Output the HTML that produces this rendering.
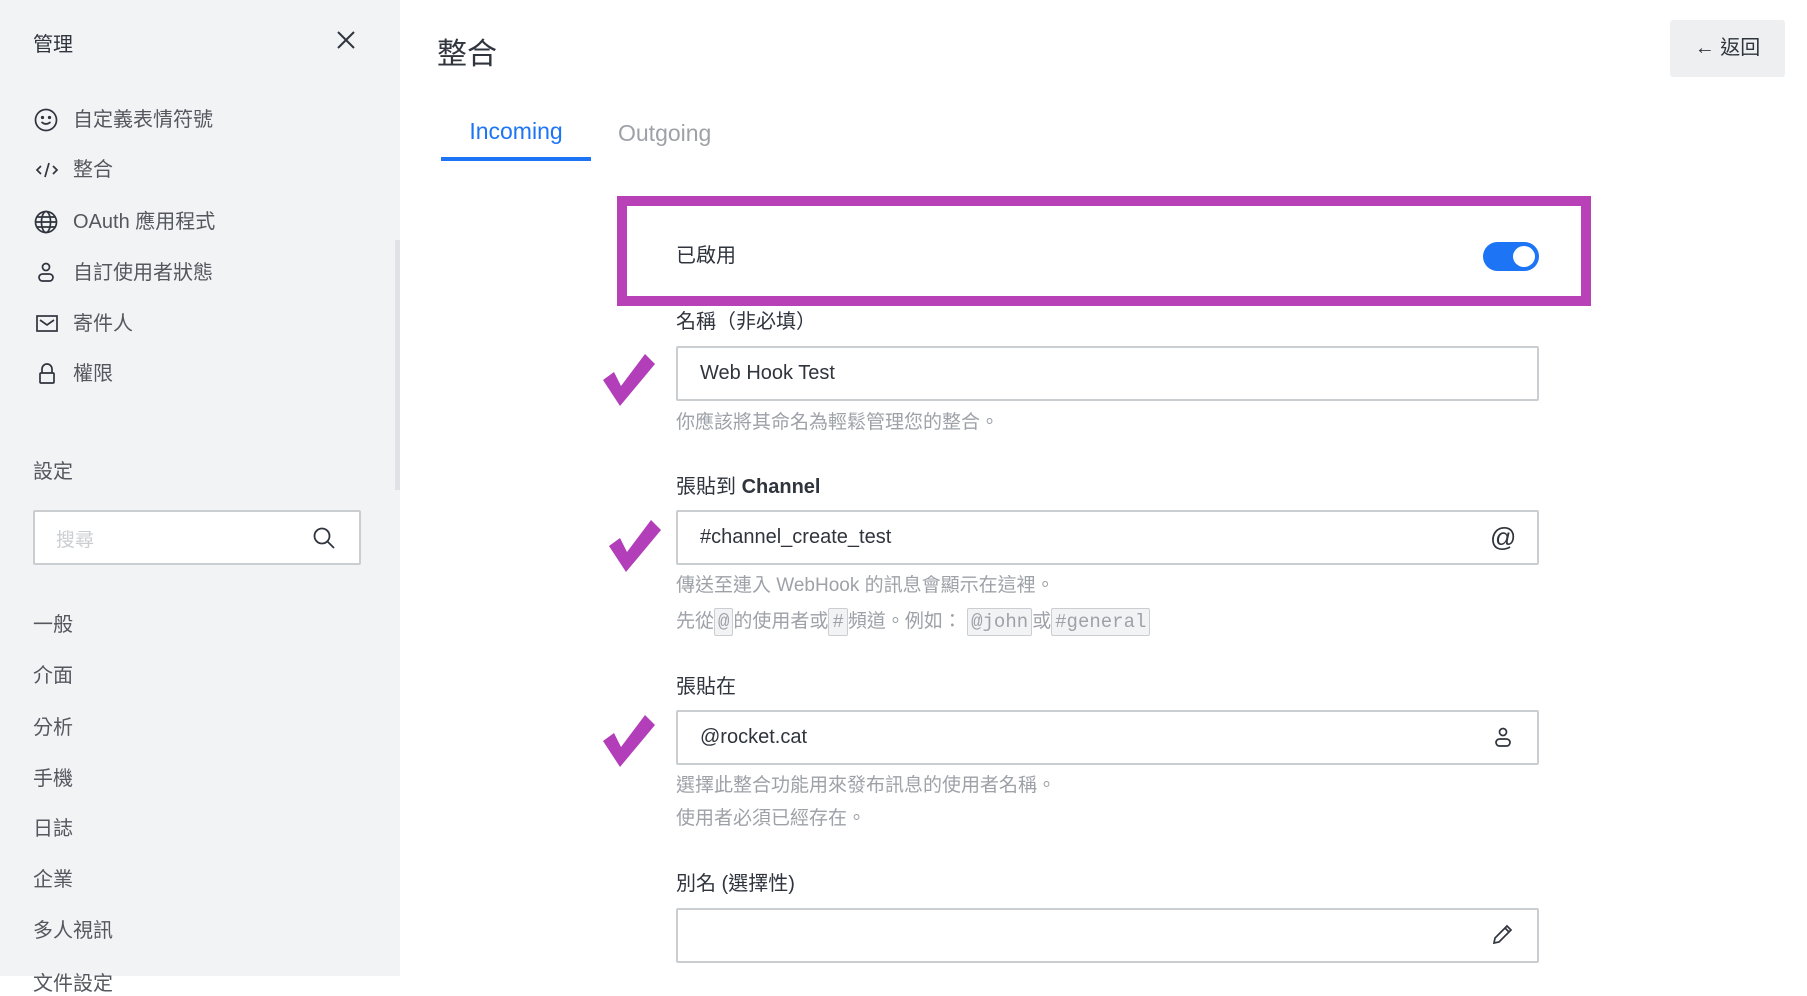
<!DOCTYPE html>
<html><head><meta charset="utf-8"><style>
*{box-sizing:border-box;margin:0;padding:0}
body{width:1807px;height:976px;overflow:hidden;background:#fff;font-family:"Liberation Sans","Noto Sans CJK TC",sans-serif;color:#2f343d;position:relative}
.a{position:absolute;white-space:nowrap}
.sb{position:absolute;left:0;top:0;width:400px;height:976px;background:#f2f3f5}
.sc{position:absolute;left:395px;top:240px;width:5px;height:250px;background:#e1e2e5}
.mi{font-size:20px;color:#54585e;line-height:24px}
.lbl{font-size:20px;color:#2f343d;line-height:24px}
.inp{position:absolute;left:676px;width:863px;height:55px;border:2px solid #cbced1;border-radius:2px;background:#fff;font-size:20px;line-height:51px;padding-left:22px;color:#2f343d}
.hint{font-size:19px;color:#9ea2a8;line-height:24px}
.code{display:inline-block;border:1px solid #cbced1;background:#f2f3f5;border-radius:2px;font-family:"Liberation Mono",monospace;font-size:19px;padding:1px 3px;line-height:24px}
</style></head><body>
<div class="sb"></div><div class="sc"></div>
<div class="a" style="left:33px;top:28px;font-size:20px;color:#2f343d">管理</div>
<svg class="a" style="left:336px;top:30px" width="20" height="20" viewBox="0 0 20 20"><path d="M2 2L18 18M18 2L2 18" stroke="#2f343d" stroke-width="2"/></svg>

<svg class="a" style="left:34px;top:108px" width="24" height="24" viewBox="0 0 24 24" fill="none" stroke="#2f343d" stroke-width="1.7"><circle cx="12" cy="12" r="10.5"/><circle cx="8.5" cy="9.5" r=".8" fill="#2f343d"/><circle cx="15.5" cy="9.5" r=".8" fill="#2f343d"/><path d="M7.5 14q4.5 4 9 0"/></svg>
<div class="a mi" style="left:73px;top:108px">自定義表情符號</div>
<svg class="a" style="left:35px;top:160px" width="24" height="20" viewBox="0 0 24 20" fill="none" stroke="#2f343d" stroke-width="1.7"><path d="M6 6L2 10L6 14M18 6L22 10L18 14M14 3L10 17"/></svg>
<div class="a mi" style="left:73px;top:158px">整合</div>
<svg class="a" style="left:34px;top:210px" width="24" height="24" viewBox="0 0 24 24" fill="none" stroke="#2f343d" stroke-width="1.7"><circle cx="12" cy="12" r="10.5"/><ellipse cx="12" cy="12" rx="4.5" ry="10.5"/><path d="M1.5 12h21M3 7h18M3 17h18"/></svg>
<div class="a mi" style="left:73px;top:210px">OAuth 應用程式</div>
<svg class="a" style="left:36px;top:261px" width="20" height="24" viewBox="0 0 20 24" fill="none" stroke="#2f343d" stroke-width="1.7"><circle cx="10" cy="6" r="3.5"/><rect x="3" y="13" width="14" height="7" rx="3.5"/></svg>
<div class="a mi" style="left:73px;top:261px">自訂使用者狀態</div>
<svg class="a" style="left:35px;top:314px" width="24" height="20" viewBox="0 0 24 20" fill="none" stroke="#2f343d" stroke-width="1.7"><rect x="2" y="2" width="20" height="15"/><path d="M5 6l7 5 7-5"/></svg>
<div class="a mi" style="left:73px;top:312px">寄件人</div>
<svg class="a" style="left:37px;top:362px" width="20" height="24" viewBox="0 0 20 24" fill="none" stroke="#2f343d" stroke-width="1.7"><path d="M5 11V7a5 5 0 0110 0v4"/><rect x="3" y="11" width="14" height="10" rx="1"/></svg>
<div class="a mi" style="left:73px;top:362px">權限</div>

<div class="a mi" style="left:33px;top:460px;color:#54585e">設定</div>
<div class="a" style="left:33px;top:510px;width:328px;height:55px;border:2px solid #cbced1;background:#fff;border-radius:2px"></div>
<div class="a" style="left:56px;top:525px;font-size:19px;color:#cbced1">搜尋</div>
<svg class="a" style="left:312px;top:526px" width="24" height="24" viewBox="0 0 24 24" fill="none" stroke="#2f343d" stroke-width="1.8"><circle cx="10" cy="10" r="7.5"/><path d="M15.5 15.5L22 22"/></svg>
<div class="a mi" style="left:33px;top:613px">一般</div>
<div class="a mi" style="left:33px;top:664px">介面</div>
<div class="a mi" style="left:33px;top:716px">分析</div>
<div class="a mi" style="left:33px;top:767px">手機</div>
<div class="a mi" style="left:33px;top:817px">日誌</div>
<div class="a mi" style="left:33px;top:868px">企業</div>
<div class="a mi" style="left:33px;top:919px">多人視訊</div>
<div class="a mi" style="left:33px;top:972px">文件設定</div>

<div class="a" style="left:437px;top:29px;font-size:30px;color:#2f343d">整合</div>
<div class="a" style="left:1670px;top:20px;width:115px;height:57px;background:#eeeff1;border-radius:3px;font-size:20px;line-height:57px;text-align:center;color:#2f343d">← 返回</div>

<div class="a" style="left:441px;top:118px;width:150px;text-align:center;font-size:23px;color:#1d74f5">Incoming</div>
<div class="a" style="left:441px;top:157px;width:150px;height:4px;background:#1d74f5"></div>
<div class="a" style="left:618px;top:120px;font-size:23px;color:#9ea2a8">Outgoing</div>

<div class="a" style="left:617px;top:196px;width:974px;height:110px;border:10px solid #b841b8"></div>
<div class="a lbl" style="left:676px;top:244px">已啟用</div>
<div class="a" style="left:1483px;top:242px;width:56px;height:29px;border-radius:15px;background:#1d74f5"></div>
<div class="a" style="left:1513px;top:246px;width:22px;height:21px;border-radius:50%;background:#fff"></div>

<div class="a lbl" style="left:676px;top:310px">名稱（非必填）</div>
<div class="inp" style="top:346px">Web Hook Test</div>
<div class="a hint" style="left:676px;top:411px">你應該將其命名為輕鬆管理您的整合。</div>

<div class="a lbl" style="left:676px;top:475px">張貼到 <b>Channel</b></div>
<div class="inp" style="top:510px">#channel_create_test</div>
<div class="a" style="left:1490px;top:522px;font-size:26px;color:#2f343d">@</div>
<div class="a hint" style="left:676px;top:574px">傳送至連入 WebHook 的訊息會顯示在這裡。</div>
<div class="a hint" style="left:676px;top:608px">先從<span class="code">@</span>的使用者或<span class="code">#</span>頻道。例如： <span class="code">@john</span>或<span class="code">#general</span></div>

<div class="a lbl" style="left:676px;top:675px">張貼在</div>
<div class="inp" style="top:710px">@rocket.cat</div>
<svg class="a" style="left:1493px;top:726px" width="20" height="24" viewBox="0 0 20 24" fill="none" stroke="#2f343d" stroke-width="1.7"><circle cx="10" cy="6" r="3.5"/><rect x="3" y="13" width="14" height="7" rx="3.5"/></svg>
<div class="a hint" style="left:676px;top:774px">選擇此整合功能用來發布訊息的使用者名稱。</div>
<div class="a hint" style="left:676px;top:807px">使用者必須已經存在。</div>

<div class="a lbl" style="left:676px;top:872px">別名 (選擇性)</div>
<div class="inp" style="top:908px"></div>
<svg class="a" style="left:1491px;top:922px" width="24" height="24" viewBox="0 0 24 24" fill="none" stroke="#2f343d" stroke-width="1.7"><path d="M3 21l1-5L16 4l4 4L8 20z M14 6l4 4"/></svg>

<svg class="a" style="left:600px;top:350px" width="56" height="56" viewBox="0 0 56 56"><path d="M3 30L14 22L21 36L45 4L55 14L20 56Z" fill="#b23fb9"/></svg>
<svg class="a" style="left:606px;top:516px" width="56" height="56" viewBox="0 0 56 56"><path d="M3 30L14 22L21 36L45 4L55 14L20 56Z" fill="#b23fb9"/></svg>
<svg class="a" style="left:600px;top:711px" width="56" height="56" viewBox="0 0 56 56"><path d="M3 30L14 22L21 36L45 4L55 14L20 56Z" fill="#b23fb9"/></svg>
</body></html>
